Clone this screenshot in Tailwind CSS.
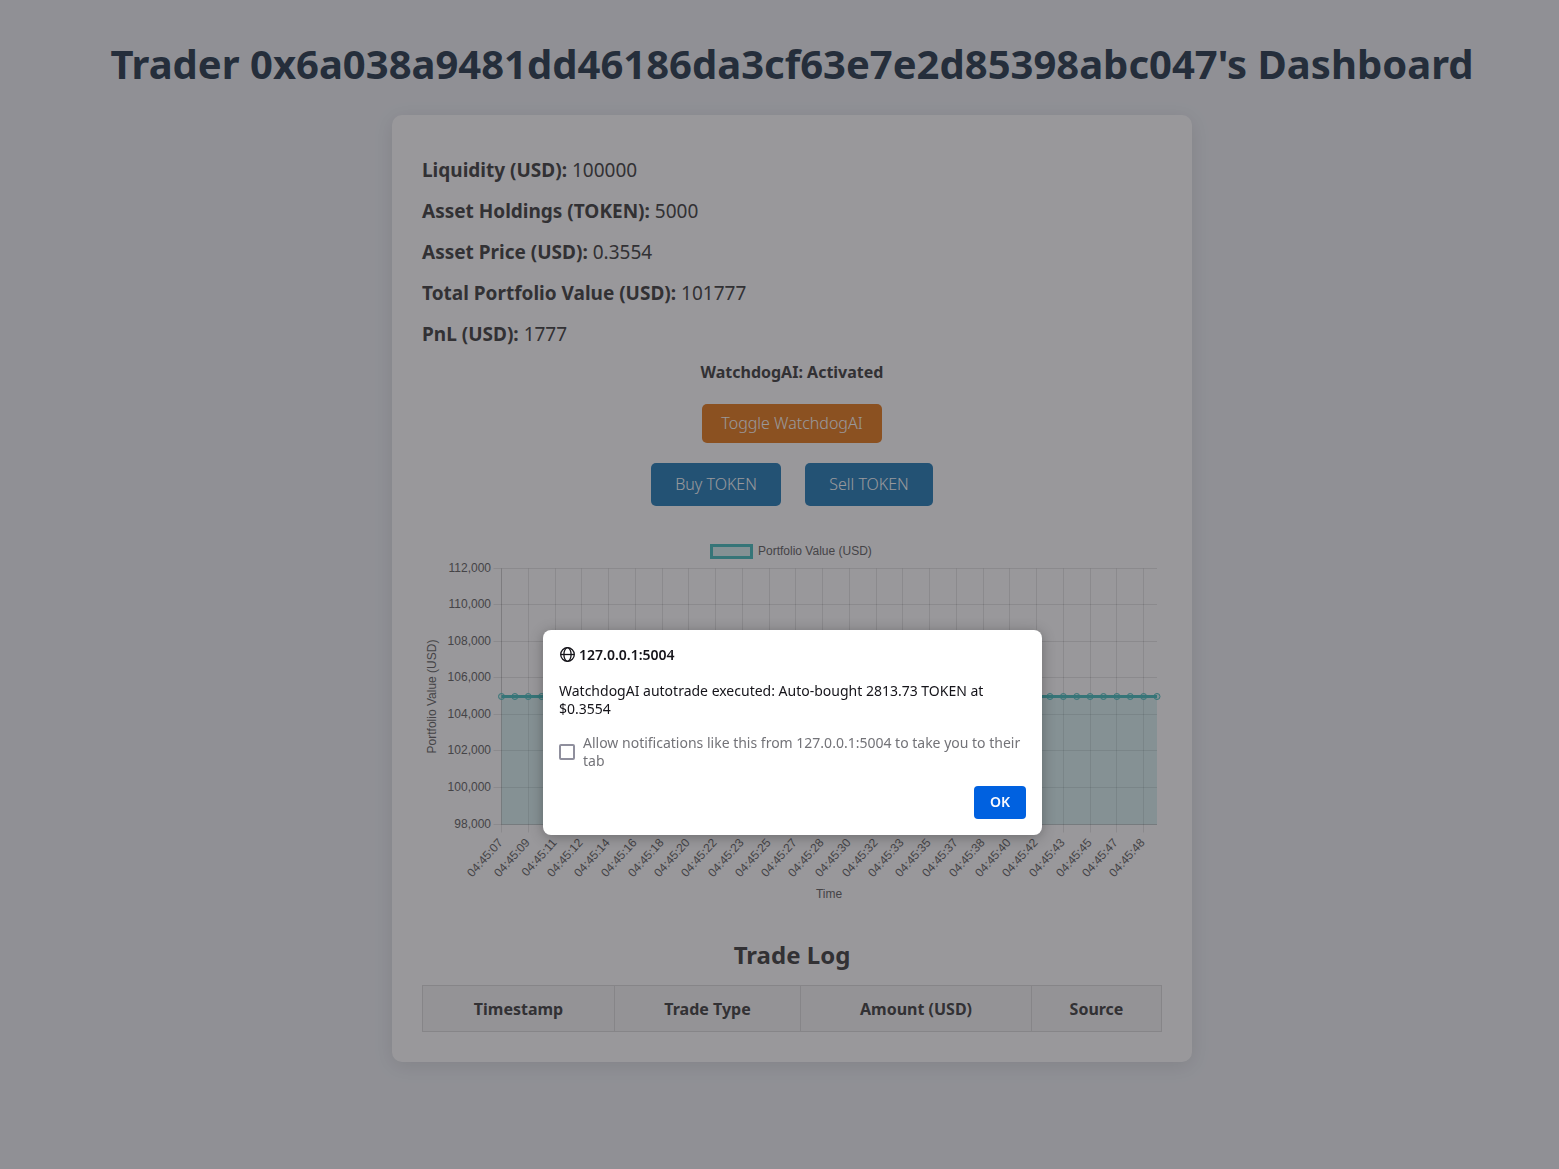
<!DOCTYPE html>
<html lang="en">
<head>
<meta charset="utf-8">
<meta name="viewport" content="width=device-width, initial-scale=1">
<title>Trader Dashboard</title>
<script src="https://cdn.jsdelivr.net/npm/@tailwindcss/browser@4"></script>
</head>
<body class="min-h-screen bg-[#eef1f5] pl-[25px] font-['Noto_Sans',sans-serif] text-[#444]">
<h1 class="pt-[34px] text-center text-[40px] leading-[60px] font-bold whitespace-nowrap text-[#2c3e50]">Trader 0x6a038a9481dd46186da3cf63e7e2d85398abc047's Dashboard</h1>
<main class="mx-auto mt-[21px] max-w-[800px] rounded-[10px] bg-white p-[30px] shadow-[0_4px_20px_rgba(0,0,0,0.1)]">
  <section class="pt-[5px] text-[19px] leading-[41px]">
    <p><strong class="font-bold">Liquidity (USD):</strong> 100000</p>
    <p><strong class="font-bold">Asset Holdings (TOKEN):</strong> 5000</p>
    <p><strong class="font-bold">Asset Price (USD):</strong> 0.3554</p>
    <p><strong class="font-bold">Total Portfolio Value (USD):</strong> 101777</p>
    <p><strong class="font-bold">PnL (USD):</strong> 1777</p>
  </section>
  <section class="flex flex-col items-center gap-5 pt-[5px]">
    <p class="text-base font-bold">WatchdogAI: Activated</p>
    <button type="button" class="h-[39px] w-[180px] rounded-[5px] bg-[#e67e22] pb-0.5 text-base font-light text-white">Toggle WatchdogAI</button>
    <div class="flex gap-6">
      <button type="button" class="h-[43px] w-[130px] rounded-[5px] bg-[#2980b9] pb-0.5 text-base font-light text-white">Buy TOKEN</button>
      <button type="button" class="h-[43px] w-[128px] rounded-[5px] bg-[#2980b9] pb-0.5 text-base font-light text-white">Sell TOKEN</button>
    </div>
  </section>
  <svg id="chart" class="mt-[30px] block w-full font-['Liberation_Sans',Arial,sans-serif] text-[12px]" viewBox="0 0 740 370" fill="#666" role="img" aria-label="Portfolio value over time"></svg>
  <h2 class="mt-[33px] text-center text-2xl leading-8 font-bold">Trade Log</h2>
  <table class="mt-[14px] w-full border-collapse bg-[#f6f6f6]">
    <thead>
      <tr class="h-[46px]">
        <th class="w-[192px] border border-[#ddd]">Timestamp</th>
        <th class="w-[186px] border border-[#ddd]">Trade Type</th>
        <th class="w-[231px] border border-[#ddd]">Amount (USD)</th>
        <th class="border border-[#ddd]">Source</th>
      </tr>
    </thead>
  </table>
</main>
<div class="fixed inset-0 flex items-start justify-center bg-[rgba(28,27,34,0.45)] pt-[630px] pl-[26px]">
  <form role="dialog" aria-modal="true" aria-labelledby="origin" class="w-[499px] rounded-lg bg-white p-4 text-[14px] leading-[18px] text-[#15141a] shadow-[0_2px_14px_rgba(0,0,0,0.3)]">
    <h3 id="origin" class="flex items-center gap-1 font-semibold">
      <svg class="size-4" viewBox="0 0 16 16" fill="none" stroke="currentColor" stroke-width="1.3"><circle cx="8.5" cy="7.5" r="6.8"/><ellipse cx="8.5" cy="7.5" rx="3.6" ry="6.8"/><path d="M1.7 7.5h13.6"/></svg>
      127.0.0.1:5004
    </h3>
    <p class="mt-[18px]">WatchdogAI autotrade executed: Auto-bought 2813.73 TOKEN at $0.3554</p>
    <div class="mt-4 flex items-center gap-2 text-[#737378]">
      <input id="allow" type="checkbox" class="size-4 shrink-0 appearance-none rounded-[2px] border-2 border-[#8f8f9d] bg-white">
      <label for="allow">Allow notifications like this from 127.0.0.1:5004 to take you to their tab</label>
    </div>
    <div class="mt-4 flex justify-end">
      <button type="submit" class="h-[33px] w-[52px] rounded-[4px] bg-[#0061e0] pb-0.5 font-semibold text-[#fbfbfe]">OK</button>
    </div>
  </form>
</div>
<script>
  const ns = 'http://www.w3.org/2000/svg';
  const chart = document.getElementById('chart');
  function add(name, attrs, text) {
    const el = document.createElementNS(ns, name);
    for (const key in attrs) el.setAttribute(key, attrs[key]);
    if (text) el.textContent = text;
    chart.appendChild(el);
  }
  const left = 79.5, right = 735, top0 = 32.5, bottom = 288.5;
  const grid = 'rgba(0,0,0,0.1)', teal = 'rgb(75,192,192)', tealFill = 'rgba(75,192,192,0.2)';
  const seconds = ['07','09','11','12','14','16','18','20','22','23','25','27','28','30','32','33','35','37','38','40','42','43','45','47','48'];
  const step = (right - left) / 49;

  // Legend and axis titles
  add('rect', { x: 289.5, y: 9.5, width: 40, height: 12, fill: tealFill, stroke: teal, 'stroke-width': 3 });
  add('text', { x: 336, y: 19 }, 'Portfolio Value (USD)');
  add('text', { x: 407, y: 362, 'text-anchor': 'middle' }, 'Time');
  add('text', { transform: 'translate(14 160.5) rotate(-90)', 'text-anchor': 'middle' }, 'Portfolio Value (USD)');

  // Vertical grid with time labels
  seconds.forEach((s, i) => {
    const x = Math.round(left + i * 2 * step - 0.5) + 0.5;
    add('path', { d: `M${x} ${top0}V${bottom + 8}`, stroke: grid });
    add('text', { transform: `translate(${x + 2} 307) rotate(-48)`, 'text-anchor': 'end' }, '04:45:' + s);
  });
  // Horizontal grid with value labels
  for (let i = 0; i < 8; i++) {
    const y = Math.floor(top0 + i * (bottom - top0) / 7 - 0.5) + 0.5;
    add('path', { d: `M${left - 8} ${y}H${right}`, stroke: grid });
    add('text', { x: 69, y: y + 3, 'text-anchor': 'end' }, (112000 - i * 2000).toLocaleString('en-US'));
  }
  add('path', { d: `M${left} ${top0}V${bottom}H${right}`, fill: 'none', stroke: grid });

  // Series
  add('rect', { x: left, y: 160.5, width: right - left, height: bottom - 160.5, fill: tealFill });
  add('path', { d: `M${left} 160.5H${right}`, stroke: teal, 'stroke-width': 3 });
  for (let i = 0; i < 50; i++) add('circle', { cx: left + i * step, cy: 160.5, r: 3, fill: tealFill, stroke: teal });
</script>
</body>
</html>
